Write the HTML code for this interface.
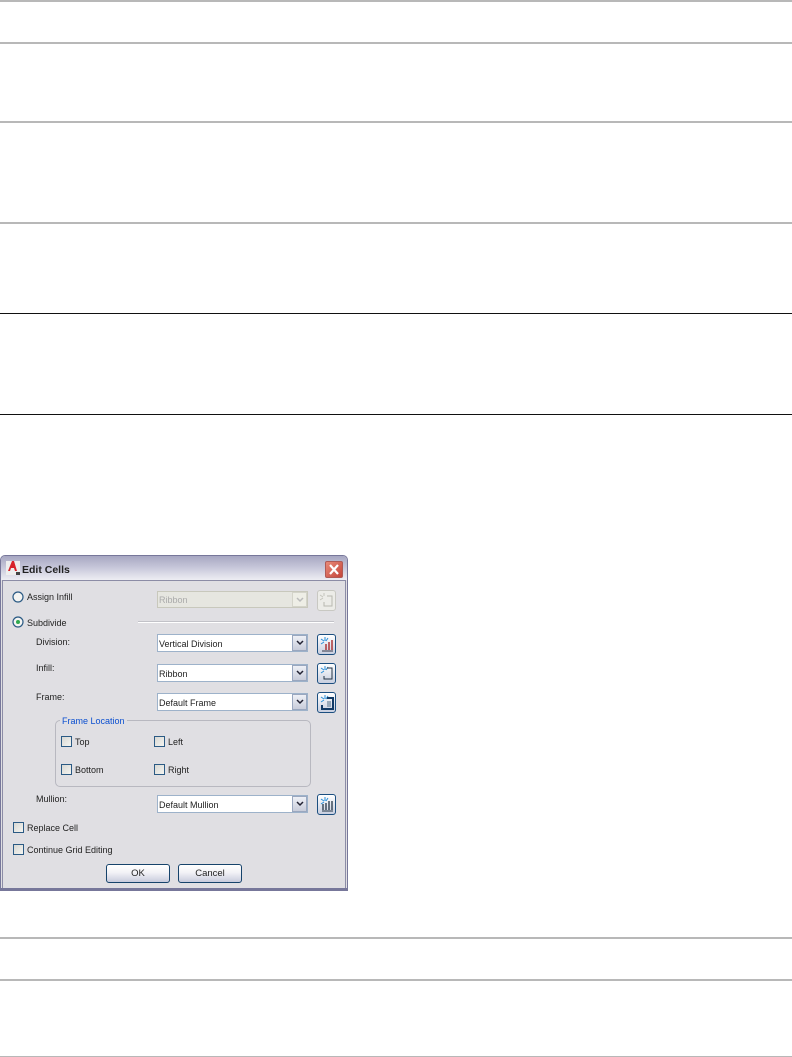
<!DOCTYPE html>
<html><head><meta charset="utf-8"><style>
html,body{margin:0;padding:0;background:#fff}
#p{position:relative;width:792px;height:1057px;overflow:hidden;background:#fff;font-family:"Liberation Sans",sans-serif;font-size:9px;color:#222}
#p div,#p span,#p svg{position:absolute;box-sizing:border-box}
.hr{left:0;width:792px;height:2px;background:#b8b8b8}
.t{white-space:nowrap;line-height:12px}
.cb{width:11px;height:11px;border:1px solid #2b5a84;background:linear-gradient(135deg,#d8d8d4,#f4f4f0)}
.combo{left:157px;width:151px;height:18px;background:#fff;border:1px solid #9db2ca}
.dd{right:0;top:0;width:15px;height:16px;background:linear-gradient(#eef0f6,#c8ccda);border:1px solid #9aa7bf}
.btn{width:64px;height:19px;border:1px solid #16436b;border-radius:3px;background:linear-gradient(#fff,#f2f2f6 45%,#c8cbdc);text-align:center;line-height:18px;color:#222;font-size:9.5px}
.ib{left:317px;width:19px;height:21px;border:1px solid #1c4f80;border-radius:3px;background:linear-gradient(#fff,#c8cfe0)}
</style></head><body><div id="p">
<div class="hr" style="top:0"></div>
<div class="hr" style="top:42px"></div>
<div class="hr" style="top:121px"></div>
<div class="hr" style="top:222px"></div>
<div class="hr" style="top:313px;height:1px;background:#111"></div>
<div class="hr" style="top:414px;height:1px;background:#111"></div>
<div class="hr" style="top:937px"></div>
<div class="hr" style="top:979px"></div>
<div class="hr" style="top:1056px;height:1px"></div>

<div style="left:0;top:555px;width:348px;height:336px;background:#e0dfe3;border:1px solid #77779a;border-bottom:3px solid #77779a;border-radius:5px 5px 0 0"></div>
<div style="left:1px;top:556px;width:346px;height:24px;background:linear-gradient(#a7a7c2,#c5c5d8 45%,#eeeef3);border-radius:4px 4px 0 0"></div>
<div style="left:2px;top:580px;width:344px;height:308px;border:1px solid #8c8ca6;border-bottom:0"></div>

<svg style="left:5px;top:560px" width="16" height="16" viewBox="0 0 16 16"><rect x="1" y="1" width="14" height="14" fill="#eee"/><path d="M3 11L7 1h2l3 10h-2L9 8H6l-1 3z" fill="#d8232a"/><rect x="11" y="12" width="4" height="3" fill="#444"/></svg>
<span class="t" style="left:22px;top:564px;font-weight:bold;font-size:10.5px;color:#222">Edit Cells</span>
<div style="left:325px;top:561px;width:18px;height:17px;background:linear-gradient(135deg,#e88a78,#c4453a);border:1px solid #b05a55;border-radius:2px"></div>
<svg style="left:325px;top:561px" width="18" height="17"><path d="M5 4l8 9M13 4l-8 9" stroke="#fff" stroke-width="2.2"/></svg>

<svg style="left:11px;top:590px" width="14" height="14"><circle cx="7" cy="7" r="5" fill="#f4f4f2" stroke="#2b5a84" stroke-width="1.2"/></svg>
<span class="t" style="left:27px;top:591px">Assign Infill</span>
<svg style="left:11px;top:615px" width="14" height="14"><circle cx="7" cy="7" r="5" fill="#f4f4f2" stroke="#2b5a84" stroke-width="1.2"/><circle cx="7" cy="7" r="2" fill="#2fa84f"/></svg>
<span class="t" style="left:27px;top:617px">Subdivide</span>
<div style="left:138px;top:622px;width:196px;height:1px;background:#fff"></div>
<div style="left:138px;top:621px;width:196px;height:1px;background:#c2c2c8"></div>

<div class="combo" style="top:591px;height:17px;background:#e6e6e0;border-color:#c8c8bc;color:#aaa"><span class="t" style="left:1px;top:2px">Ribbon</span><div class="dd" style="top:0;height:15px;background:#eeeee6;border-color:#d4d4ca"></div></div>
<svg style="left:295px;top:597px" width="12" height="6"><path d="M2 1l3 3 3-3" fill="none" stroke="#bbb" stroke-width="1.5"/></svg>
<div class="ib" style="top:590px;background:#ecece8;border-color:#c8c8c2"></div>
<svg style="left:317px;top:590px" width="19" height="21"><path d="M10 6h5v10H7v-4" fill="none" stroke="#b8b8b0"/><path d="M3 5l3 2M7 3v3M3 10l3-2" stroke="#c4c4bc"/></svg>

<span class="t" style="left:36px;top:636px">Division:</span>
<div class="combo" style="top:634px"><span class="t" style="left:1px;top:3px">Vertical Division</span><div class="dd"></div></div>
<svg style="left:295px;top:640px" width="12" height="6"><path d="M2 1l3 3 3-3" fill="none" stroke="#223" stroke-width="1.5"/></svg>
<div class="ib" style="top:634px"></div>
<svg style="left:317px;top:634px" width="19" height="21"><path d="M4 5l3 2M8 3v4M4 10l3-2M11 4l-2 3" stroke="#2a8fd8"/><path d="M9 16V10M12 16V8M15 16V6" stroke="#a82a2a" stroke-width="1.4"/><path d="M5 17h11" stroke="#334"/></svg>

<span class="t" style="left:36px;top:662px">Infill:</span>
<div class="combo" style="top:664px"><span class="t" style="left:1px;top:3px">Ribbon</span><div class="dd"></div></div>
<svg style="left:295px;top:670px" width="12" height="6"><path d="M2 1l3 3 3-3" fill="none" stroke="#223" stroke-width="1.5"/></svg>
<div class="ib" style="top:663px"></div>
<svg style="left:317px;top:663px" width="19" height="21"><path d="M4 5l3 2M8 3v4M4 10l3-2M11 4l-2 3" stroke="#2a8fd8"/><path d="M10 5h5v11H7v-3" fill="none" stroke="#234"/></svg>

<span class="t" style="left:36px;top:691px">Frame:</span>
<div class="combo" style="top:693px"><span class="t" style="left:1px;top:3px">Default Frame</span><div class="dd"></div></div>
<svg style="left:295px;top:699px" width="12" height="6"><path d="M2 1l3 3 3-3" fill="none" stroke="#223" stroke-width="1.5"/></svg>
<div class="ib" style="top:692px"></div>
<svg style="left:317px;top:692px" width="19" height="21"><path d="M4 5l3 2M8 3v4M4 10l3-2M11 4l-2 3" stroke="#2a8fd8"/><path d="M10 6h6v11H5v-4" fill="none" stroke="#123a66" stroke-width="2"/><rect x="10" y="9" width="4" height="6" fill="#9ab"/></svg>

<div style="left:55px;top:720px;width:256px;height:67px;border:1px solid #b8b8c0;border-radius:5px"></div>
<span class="t" style="left:60px;top:715px;background:#e0dfe3;padding:0 2px;color:#0b4fd0">Frame Location</span>
<div class="cb" style="left:61px;top:736px"></div><span class="t" style="left:75px;top:736px">Top</span>
<div class="cb" style="left:154px;top:736px"></div><span class="t" style="left:168px;top:736px">Left</span>
<div class="cb" style="left:61px;top:764px"></div><span class="t" style="left:75px;top:764px">Bottom</span>
<div class="cb" style="left:154px;top:764px"></div><span class="t" style="left:168px;top:764px">Right</span>

<span class="t" style="left:36px;top:793px">Mullion:</span>
<div class="combo" style="top:795px"><span class="t" style="left:1px;top:3px">Default Mullion</span><div class="dd"></div></div>
<svg style="left:295px;top:801px" width="12" height="6"><path d="M2 1l3 3 3-3" fill="none" stroke="#223" stroke-width="1.5"/></svg>
<div class="ib" style="top:794px"></div>
<svg style="left:317px;top:794px" width="19" height="21"><path d="M4 5l3 2M8 3v4M4 10l3-2M11 4l-2 3" stroke="#2a8fd8"/><path d="M6 16V10M9 16V9M12 16V7M15 16V7" stroke="#234" stroke-width="1.3"/><path d="M5 17h11" stroke="#234"/></svg>

<div class="cb" style="left:13px;top:822px"></div><span class="t" style="left:27px;top:822px">Replace Cell</span>
<div class="cb" style="left:13px;top:844px"></div><span class="t" style="left:27px;top:844px">Continue Grid Editing</span>

<div class="btn" style="left:106px;top:864px">OK</div>
<div class="btn" style="left:178px;top:864px">Cancel</div>
</div></body></html>
